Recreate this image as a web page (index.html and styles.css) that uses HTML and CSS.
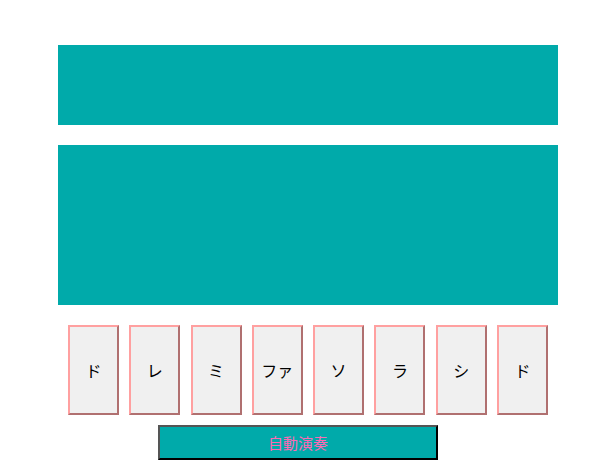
FILE: index.html
```html
<!DOCTYPE html>
<html lang="ja">
<head>
<meta charset="utf-8">
<link rel="stylesheet" href="styles.css">
</head>
<body>
<div class="app">
  <div class="panel panel-top"></div>
  <div class="panel panel-main"></div>
  <div class="keys">
    <button class="key">ド</button>
    <button class="key">レ</button>
    <button class="key">ミ</button>
    <button class="key">ファ</button>
    <button class="key">ソ</button>
    <button class="key">ラ</button>
    <button class="key">シ</button>
    <button class="key">ド</button>
  </div>
  <button class="auto">自動演奏</button>
</div>
</body>
</html>
```
FILE: styles.css
```css
html, body {
  margin: 0;
  padding: 0;
  background: #ffffff;
}
.app {
  width: 500px;
  padding: 45px 0 0 58px;
  display: flex;
  flex-direction: column;
  font-family: "Noto Sans CJK JP", "Noto Sans", sans-serif;
}
.panel {
  background: #00aaaa;
}
.panel-top {
  height: 80px;
}
.panel-main {
  height: 160px;
  margin-top: 20px;
}
.keys {
  margin-top: 20px;
  display: flex;
  justify-content: center;
  gap: 10.28px;
}
.key {
  box-sizing: border-box;
  width: 51px;
  height: 90px;
  padding: 0;
  margin: 0;
  background: #f0f0f0;
  border-style: solid;
  border-width: 2px;
  border-color: #ffa0a0 #b07070 #b07070 #ffa0a0;
  font-family: "Noto Sans CJK JP", sans-serif;
  font-size: 16px;
  color: #000000;
}
.auto {
  box-sizing: border-box;
  align-self: flex-start;
  margin: 10px 0 0 100px;
  width: 280px;
  height: 35px;
  padding: 0;
  background: #00aaaa;
  border-style: solid;
  border-width: 2px;
  border-color: #555555 #000000 #000000 #555555;
  color: #ff69b4;
  font-family: "Noto Sans CJK JP", sans-serif;
  font-size: 15px;
}
```
